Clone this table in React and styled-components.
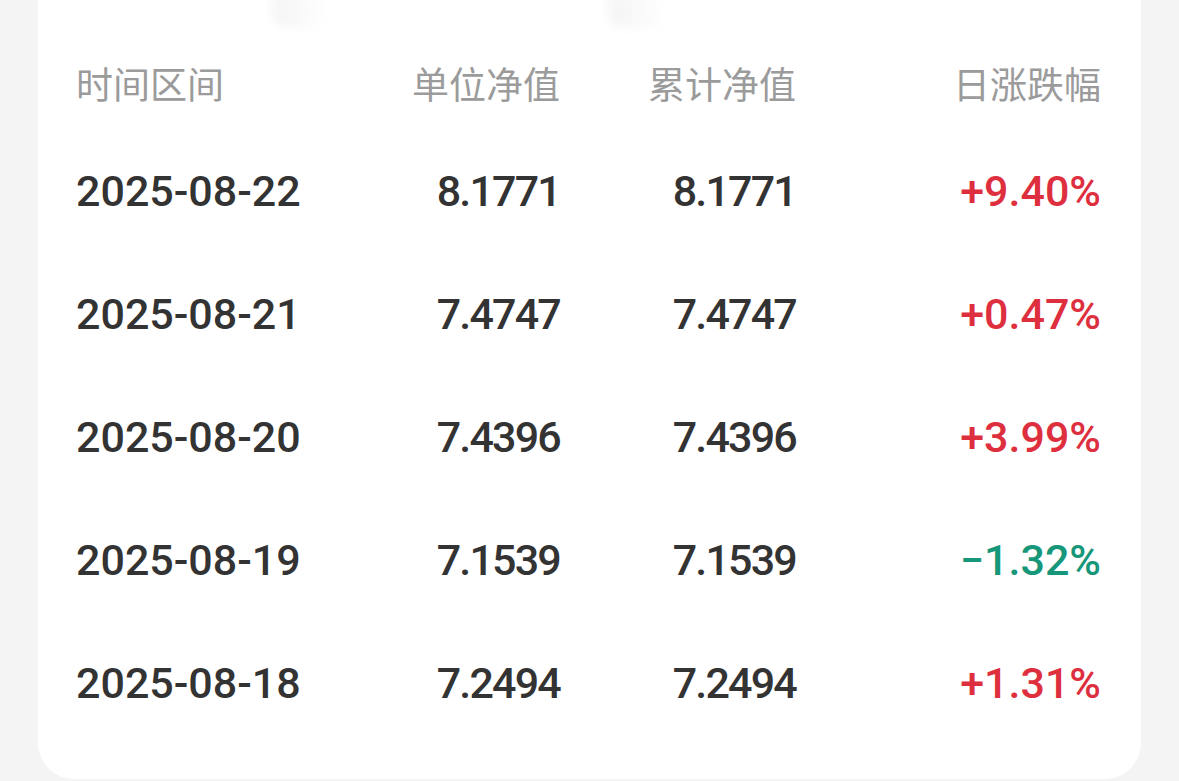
import React from "react";
import styled, { createGlobalStyle } from "styled-components";

const Global = createGlobalStyle`
  html, body { margin: 0; padding: 0; background: #f4f4f4; }
  body { width: 1179px; height: 781px; overflow: hidden; }
`;

const Page = styled.div`
  width: 1179px;
  height: 781px;
  background: #f4f4f4;
  padding-left: 38px;
  box-sizing: border-box;
`;

const Card = styled.div`
  width: 1103px;
  height: 779px;
  background: #ffffff;
  border-radius: 0 0 36px 36px;
  box-sizing: border-box;
  padding: 0 40px 0 38px;
  display: flex;
  flex-direction: column;
  overflow: hidden;
`;

const TopStrip = styled.div`
  height: 44px;
  display: flex;
  align-items: flex-start;
  padding-left: 196px;
  gap: 282px;
`;

const Blob = styled.div`
  width: ${(p) => p.$w}px;
  height: 32px;
  margin-top: -4px;
  border-radius: 0 0 16px 16px;
  background: linear-gradient(to right, #f5f5f5, #f9f9f9 50%, #ffffff);
  filter: blur(5px);
`;

const Grid = styled.div`
  display: grid;
  grid-template-columns: 254px 230px 236px 1fr;
`;

const HeadCell = styled.div`
  height: 85px;
  display: flex;
  align-items: center;
  justify-content: ${(p) => (p.$right ? "flex-end" : "flex-start")};
  font-family: "Noto Sans CJK SC", "Noto Sans", sans-serif;
  font-size: 37px;
  line-height: 1;
  color: #9b9b9b;
  padding-bottom: 7px;
  padding-right: ${(p) => (p.$shift ? "0" : "0")};
  box-sizing: border-box;
`;

const Cell = styled.div`
  height: 123px;
  display: flex;
  align-items: center;
  justify-content: ${(p) => (p.$right ? "flex-end" : "flex-start")};
  font-family: Roboto, "Liberation Sans", sans-serif;
  font-weight: 500;
  font-size: 43px;
  line-height: 1;
  letter-spacing: ${(p) => (p.$tight ? "-1.8px" : "0")};
  color: ${(p) => p.$color || "#333333"};
  padding-top: 2px;
  box-sizing: border-box;
`;

const rows = [
  ["2025-08-22", "8.1771", "8.1771", "+9.40%"],
  ["2025-08-21", "7.4747", "7.4747", "+0.47%"],
  ["2025-08-20", "7.4396", "7.4396", "+3.99%"],
  ["2025-08-19", "7.1539", "7.1539", "\u22121.32%"],
  ["2025-08-18", "7.2494", "7.2494", "+1.31%"],
];

const RED = "#de2f3f";
const GREEN = "#17977a";

export default function App() {
  return (
    <>
      <Global />
      <Page>
        <Card>
          <TopStrip>
            <Blob $w={54} />
            <Blob $w={58} />
          </TopStrip>
          <Grid>
            <HeadCell>时间区间</HeadCell>
            <HeadCell $right>单位净值</HeadCell>
            <HeadCell $right>累计净值</HeadCell>
            <HeadCell $right>日涨跌幅</HeadCell>
            {rows.map((r) => (
              <React.Fragment key={r[0]}>
                <Cell>{r[0]}</Cell>
                <Cell $right $tight>{r[1]}</Cell>
                <Cell $right $tight>{r[2]}</Cell>
                <Cell $right $color={r[3].startsWith("+") ? RED : GREEN}>
                  {r[3]}
                </Cell>
              </React.Fragment>
            ))}
          </Grid>
        </Card>
      </Page>
    </>
  );
}
